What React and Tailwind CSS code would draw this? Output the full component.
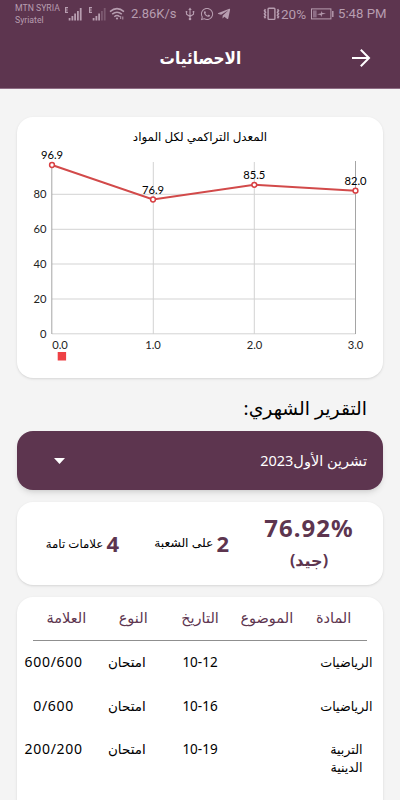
import React from "react";
import { FaWhatsapp, FaTelegramPlane } from "react-icons/fa";

const points = [
  { x: 52, y: 165, label: "96.9" },
  { x: 153, y: 199.5, label: "76.9" },
  { x: 254.3, y: 184.8, label: "85.5" },
  { x: 355.5, y: 190.7, label: "82.0" },
];

const yTicks = [
  { value: 80, y: 194.3 },
  { value: 60, y: 229.3 },
  { value: 40, y: 264 },
  { value: 20, y: 299 },
  { value: 0, y: 333.8 },
];

const xTicks = [
  { label: "0.0", x: 60 },
  { label: "1.0", x: 153 },
  { label: "2.0", x: 254.5 },
  { label: "3.0", x: 355.5 },
];

const rows = [
  { subject: "الرياضيات", topic: "", date: "10-12", type: "امتحان", mark: "600/600" },
  { subject: "الرياضيات", topic: "", date: "10-16", type: "امتحان", mark: "0/600" },
  { subject: "التربية الدينية", topic: "", date: "10-19", type: "امتحان", mark: "200/200" },
];

const Signal = ({ weak }) => (
  <svg width="18" height="15" viewBox="0 0 18 15" fill="#b79db0">
    <path d="M0 0h3v1.2H1.2v1.2h1.5v1.2H1.2v1.2H3V6H0z" />
    <rect x="3.7" y="11" width="1.8" height="2.5" />
    <rect x="6.5" y="9" width="1.8" height="4.5" />
    <rect x="9.2" y="6.5" width="1.8" height="7" />
    <rect x="12" y="4" width="1.8" height="9.5" opacity={weak ? 0.35 : 1} />
    <rect x="14.8" y="1" width="1.8" height="12.5" opacity={weak ? 0.35 : 1} />
  </svg>
);

const Wifi = () => (
  <svg width="16" height="14" viewBox="0 0 16 14" fill="none" stroke="#b79db0" strokeWidth="1.5">
    <path d="M1 4.6Q8 -1.4 15 4.6M3.2 7.2Q8 3.2 12.8 7.2M5.3 9.7Q8 7.4 10.7 9.7" />
    <circle cx="8" cy="11.5" r="1.1" fill="#b79db0" stroke="none" />
    <path d="M11.7 9v3M13.8 9.5v3" strokeWidth="1" />
  </svg>
);

const Usb = () => (
  <svg width="10" height="14" viewBox="0 0 10 14" fill="none" stroke="#b79db0" strokeWidth="1.1">
    <path d="M5 2v10M1.5 5v2.2L5 9.5l3.5-2.3V5" />
    <path d="M3.3 3L5 .5 6.7 3zM.7 4h1.6v1.6H.7zM7.7 4h1.6v1.6H7.7z" fill="#b79db0" stroke="none" />
    <circle cx="5" cy="12" r="1.3" fill="#b79db0" stroke="none" />
  </svg>
);

const Vibrate = () => (
  <svg width="17" height="14" viewBox="0 0 17 14" fill="none" stroke="#b79db0">
    <rect x="5.1" y="1.2" width="6.8" height="11.2" rx=".8" strokeWidth="1.4" />
    <path
      d="M2.5 2.3l-1 1.5 1 1.5-1 1.5 1 1.5-1 1.5 1 1.5M14.5 2.3l1 1.5-1 1.5 1 1.5-1 1.5 1 1.5-1 1.5"
      strokeWidth="1.6"
    />
  </svg>
);

const Battery = () => (
  <svg width="23" height="12" viewBox="0 0 23 12" fill="none" stroke="#b79db0">
    <rect x=".5" y=".9" width="19.4" height="10" />
    <rect x="2" y="2.4" width="3.6" height="7" fill="#8e6d86" stroke="none" />
    <path d="M6 6.3l4.2-1V3l1.3 2 3.5.6-4.2 1V9L9.5 7z" fill="#b79db0" stroke="none" />
    <path d="M21.8 3v6" strokeWidth="1.4" />
  </svg>
);

const StatusBar = () => (
  <div className="flex h-7 items-center pl-[15px] font-['Roboto',sans-serif] text-[#b79db0]">
    <div className="w-[50px] whitespace-nowrap text-[8.7px] leading-3">
      <div>MTN SYRIA</div>
      <div>Syriatel</div>
    </div>
    <Signal />
    <div className="w-1.5" />
    <Signal weak />
    <div className="ml-0.5 w-[22px]">
      <Wifi />
    </div>
    <span className="w-[54px] whitespace-nowrap text-[13px]">2.86K/s</span>
    <div className="w-[15px]">
      <Usb />
    </div>
    <FaWhatsapp className="mr-[3px] size-3.5" />
    <FaTelegramPlane className="size-3.5" />
    <div className="ml-[32px] w-[18px]">
      <Vibrate />
    </div>
    <span className="w-[30px] text-[13.5px]">20%</span>
    <Battery />
    <span className="ml-1 whitespace-nowrap text-[13.2px]">5:48 PM</span>
  </div>
);

const Chart = () => (
  <svg
    className="block font-['Lato',sans-serif]"
    width="366"
    height="222"
    viewBox="17 156 366 222"
    overflow="visible"
    fontSize="11.2"
    fill="#222"
  >
    {yTicks.map((t) => (
      <g key={t.value}>
        <line x1="52" x2="355.5" y1={t.y} y2={t.y} stroke="#d3d3d3" />
        <text x="46.5" y={t.y + 3.7} textAnchor="end">
          {t.value}
        </text>
      </g>
    ))}
    <line x1="153.3" x2="153.3" y1="162" y2="334" stroke="#d3d3d3" />
    <line x1="254.3" x2="254.3" y1="162" y2="334" stroke="#d3d3d3" />
    <line x1="51.8" x2="51.8" y1="162" y2="334" stroke="#a5a5a5" />
    <line x1="355.5" x2="355.5" y1="161" y2="334" stroke="#a5a5a5" />
    {xTicks.map((t) => (
      <text key={t.label} x={t.x} y="349" textAnchor="middle">
        {t.label}
      </text>
    ))}
    <polyline
      points={points.map((p) => `${p.x},${p.y}`).join(" ")}
      fill="none"
      stroke="#d24a4a"
      strokeWidth="2"
    />
    {points.map((p) => (
      <g key={p.label}>
        <circle cx={p.x} cy={p.y} r="2.4" fill="#fff" stroke="#d83f42" strokeWidth="1.5" />
        <text x={p.x} y={p.y - 5.9} textAnchor="middle" fill="#000">
          {p.label}
        </text>
      </g>
    ))}
    <rect x="57.7" y="352" width="8.4" height="8.5" fill="#ee4145" />
  </svg>
);

const App = () => {
  return (
    <div
      dir="rtl"
      className="h-[800px] w-[400px] overflow-hidden bg-[#f4f4f4] font-['Noto_Sans','DejaVu_Sans',sans-serif] text-black"
    >
      <header className="h-[89px] border-b border-[#8d6c84] bg-[#5d354f]">
        <div dir="ltr">
          <StatusBar />
        </div>
        <div className="flex h-[60px] items-center px-[29px] text-white">
          <svg width="20" height="20" viewBox="0 0 20 20" fill="none" stroke="#fff" strokeWidth="2">
            <path d="M1 10h17M9.8 1.8l8.2 8.2-8.2 8.2" />
          </svg>
          <h1 className="flex-1 pl-5 text-center text-[17px] font-bold">
            <span className="inline-block scale-x-90">الاحصائيات</span>
          </h1>
        </div>
      </header>

      <main className="px-[17px] pt-7">
        {/* Chart */}
        <section dir="ltr" className="h-[261px] rounded-2xl bg-white shadow">
          <h2 dir="rtl" className="h-[39px] pt-[9px] text-center text-[11.9px] leading-5">
            المعدل التراكمي لكل المواد
          </h2>
          <Chart />
        </section>

        <h2 className="flex h-[53px] items-center px-4 pt-2 text-[18.8px]">التقرير الشهري:</h2>

        {/* Month select */}
        <button className="flex h-[59px] w-full items-center justify-between rounded-2xl bg-[#5d354f] px-4 text-white shadow-md">
          <span className="text-[14.5px]">تشرين الأول2023</span>
          <svg className="ml-[21px]" width="11" height="6" viewBox="0 0 11 6" fill="#fff">
            <path d="M0 0h11L5.5 6z" />
          </svg>
        </button>

        {/* Summary */}
        <section className="mt-3 flex h-[83px] items-center rounded-2xl bg-white shadow">
          <div className="mr-[26px] w-[96px] text-center font-bold text-[#5d354f]">
            <div dir="ltr" className="text-[24px] leading-8 tracking-[1px]">76.92%</div>
            <div className="text-[16px] leading-8">(جيد)</div>
          </div>
          <div className="mr-[32px] flex w-[78px] items-center gap-[3px] whitespace-nowrap">
            <span className="text-[22px] font-bold text-[#5d354f]">2</span>
            <span className="text-[12.3px]">على الشعبة</span>
          </div>
          <div className="mr-[32px] flex items-center gap-[3px] whitespace-nowrap">
            <span className="text-[22px] font-bold text-[#5d354f]">4</span>
            <span className="text-[11.8px]">علامات تامة</span>
          </div>
        </section>

        {/* Marks */}
        <section className="mt-3 h-[240px] rounded-t-2xl bg-white shadow">
          <div className="mx-4 grid h-11 grid-cols-5 items-center border-b border-[#8f8f8f] pb-0.5 text-center text-[14.5px] text-[#5d354f]">
            <span>المادة</span>
            <span>الموضوع</span>
            <span>التاريخ</span>
            <span>النوع</span>
            <span>العلامة</span>
          </div>
          {rows.map((row) => (
            <div key={row.date} className="grid h-[43.5px] grid-cols-5 pt-3 text-center text-[13.5px] leading-[18px]">
              <span className="px-2.5 text-[12.7px]">{row.subject}</span>
              <span>{row.topic}</span>
              <span dir="ltr">{row.date}</span>
              <span>{row.type}</span>
              <span dir="ltr" className="text-[14px] tracking-[0.7px]">{row.mark}</span>
            </div>
          ))}
        </section>
      </main>
    </div>
  );
};

export default App;
